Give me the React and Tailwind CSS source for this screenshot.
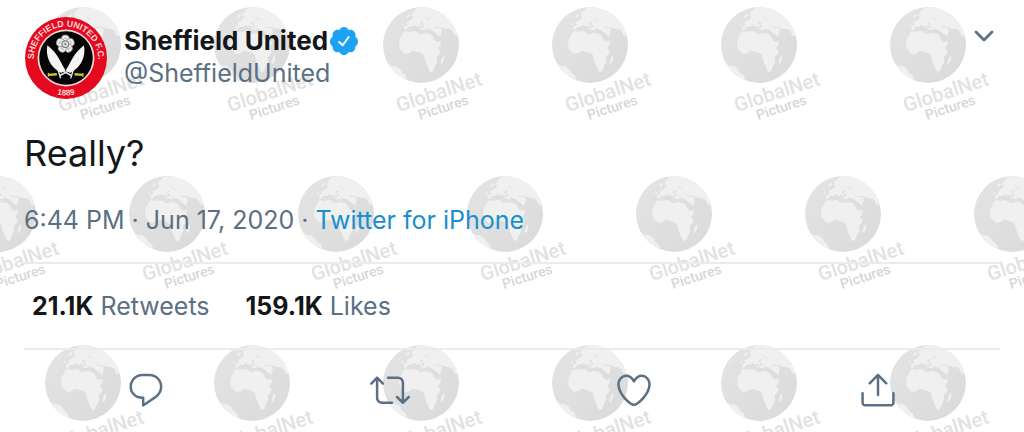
import { ChevronDown } from "lucide-react"

const actions = [
  {
    label: "Reply",
    paths: [
      "M14.046 2.242l-4.148-.01h-.002c-4.374 0-7.8 3.427-7.8 7.802 0 4.098 3.186 7.206 7.465 7.37v3.828c0 .108.044.286.12.403.142.225.384.347.632.347.138 0 .277-.038.402-.118.264-.168 6.473-4.14 8.088-5.506 1.902-1.61 3.04-3.97 3.043-6.312v-.017c-.006-4.367-3.43-7.787-7.8-7.788zm3.787 12.972c-1.134.96-4.862 3.405-6.772 4.643V16.67c0-.414-.335-.75-.75-.75h-.396c-3.66 0-6.318-2.476-6.318-5.886 0-3.534 2.768-6.302 6.3-6.302l4.147.01h.002c3.532 0 6.3 2.766 6.302 6.296-.003 1.91-.942 3.844-2.514 5.176z",
    ],
  },
  {
    label: "Retweet",
    paths: [
      "M23.77 15.67c-.292-.293-.767-.293-1.06 0l-2.22 2.22V7.65c0-2.068-1.683-3.75-3.75-3.75h-5.85c-.414 0-.75.336-.75.75s.336.75.75.75h5.85c1.24 0 2.25 1.01 2.25 2.25v10.24l-2.22-2.22c-.293-.293-.768-.293-1.06 0s-.294.768 0 1.06l3.5 3.5c.145.147.337.22.53.22s.383-.072.53-.22l3.5-3.5c.294-.292.294-.767 0-1.06zm-10.66 3.28H7.26c-1.24 0-2.25-1.01-2.25-2.25V6.46l2.22 2.22c.148.147.34.22.532.22s.384-.073.53-.22c.293-.293.293-.768 0-1.06l-3.5-3.5c-.293-.294-.768-.294-1.06 0l-3.5 3.5c-.294.292-.294.767 0 1.06s.767.293 1.06 0l2.22-2.22V16.7c0 2.068 1.683 3.75 3.75 3.75h5.85c.414 0 .75-.336.75-.75s-.337-.75-.75-.75z",
    ],
  },
  {
    label: "Like",
    paths: [
      "M12 21.638h-.014C9.403 21.59 1.95 14.856 1.95 8.478c0-3.064 2.525-5.754 5.403-5.754 2.29 0 3.83 1.58 4.646 2.73.814-1.148 2.354-2.73 4.645-2.73 2.88 0 5.404 2.69 5.404 5.755 0 6.376-7.454 13.11-10.037 13.157H12zM7.354 4.225c-2.08 0-3.903 1.988-3.903 4.255 0 5.74 7.034 11.596 8.55 11.658 1.518-.062 8.55-5.917 8.55-11.658 0-2.267-1.823-4.255-3.903-4.255-2.528 0-3.94 2.936-3.952 2.965-.23.562-1.156.562-1.387 0-.014-.03-1.425-2.965-3.954-2.965z",
    ],
  },
  {
    label: "Share",
    paths: [
      "M17.53 7.47l-5-5c-.293-.293-.768-.293-1.06 0l-5 5c-.294.293-.294.768 0 1.06s.767.294 1.06 0l3.72-3.72V15c0 .414.336.75.75.75s.75-.336.75-.75V4.81l3.72 3.72c.146.147.338.22.53.22s.384-.072.53-.22c.293-.293.293-.767 0-1.06z",
      "M19.708 21.944H4.292C3.028 21.944 2 20.916 2 19.652V14c0-.414.336-.75.75-.75s.75.336.75.75v5.652c0 .437.355.792.792.792h15.416c.437 0 .792-.355.792-.792V14c0-.414.336-.75.75-.75s.75.336.75.75v5.652c0 1.264-1.028 2.292-2.292 2.292z",
    ],
  },
]

const stats = [
  { value: "21.1K", label: "Retweets" },
  { value: "159.1K", label: "Likes" },
]

// Every second row is shifted by half a step
const marks = [0, 1, 2].flatMap((row) =>
  [0, 1, 2, 3, 4, 5, 6].map((col) => ({
    x: (row % 2 ? -2 : 83) + col * 169,
    y: 45 + row * 169,
  }))
)

const Watermark = () => (
  <svg className="absolute inset-0 h-full w-full" aria-hidden="true">
    <defs>
      <linearGradient id="sea" x1="0" y1="0" x2="1" y2="1">
        <stop offset="0" stopColor="#e4e4e4" />
        <stop offset="1" stopColor="#dadada" />
      </linearGradient>
      <clipPath id="globe-clip">
        <circle cx="152" cy="134" r="114" />
      </clipPath>
      <g id="mark">
        <g transform="scale(0.3333) translate(-152 -134)" clipPath="url(#globe-clip)">
          <circle cx="152" cy="134" r="115" fill="url(#sea)" />
          <g fill="#f0f0f0">
            <path d="M104 92L118 95L128 92L139 94L144 100L154 101L163 98L180 101L187 108L192 118L199 124L212 122L210 134L203 144L211 151L208 162L199 171L201 184L194 198L188 213L180 215L174 204L168 190L163 176L161 164L151 157L140 154L128 151L116 159L104 161L95 153L88 144L86 132L88 116L95 106L98 97Z" />
            <path d="M126 38L140 24L160 18L190 20L225 45L255 80L262 108L252 105L246 91L238 87L226 85L213 82L214 95L209 109L196 99L183 88L174 87L160 89L150 86L145 78L139 80L133 73L124 80L113 84L108 90L101 87L103 77L112 74L108 67L120 59L129 52L123 48Z" />
            <path d="M92 73L96 65L101 68L99 76ZM106 49L115 41L120 43L112 53Z" />
            <path d="M216 169L222 165L221 179L214 192L210 187Z" />
            <path d="M40 182L54 190L64 197L78 198L90 207L95 217L106 225L113 246L70 236Z" />
          </g>
          <g fill="none" stroke="#d9d9d9" strokeWidth="3" strokeLinecap="round">
            <path d="M109 89Q114 78 123 81L131 90M133 78L141 88M145 77Q152 86 161 77L151 69L158 65" />
            <path d="M168 82L177 93L204 111M164 52L176 59M192 80L213 82" strokeWidth="2" />
            <path d="M94 72L102 63M119 53L128 47" strokeWidth="2" />
          </g>
        </g>
        <g transform="rotate(-18)" fontFamily="Roboto, sans-serif" fontWeight="500">
          <text x="-42" y="57" fontSize="20" fill="#e2e2e2">GlobalNet</text>
          <text x="-24" y="71" fontSize="14" fill="#d6d6d6">Pictures</text>
        </g>
      </g>
    </defs>
    {marks.map((mark) => (
      <use key={`${mark.x}-${mark.y}`} href="#mark" x={mark.x} y={mark.y} />
    ))}
  </svg>
)

const Sword = () => (
  <>
    <path d="M67 84C61 116 74 148 108 166L121 158C108 142 101 110 67 84Z" fill="#f4f4f4" />
    <path d="M112 160L138 174" stroke="#e5e5e5" strokeWidth="5" />
    <path d="M143 159L136 182" stroke="#eee" strokeWidth="4" />
    <path d="M147 170L172 172" stroke="#d3c32c" strokeWidth="7" />
    <path d="M172 166V177" stroke="#d3c32c" strokeWidth="4" />
  </>
)

const Crest = () => (
  <svg viewBox="-2 -2 248 248" className="h-full w-full" role="img" aria-label="Sheffield United crest">
    <defs>
      <path id="ring-top" d="M28.1 139.5A95 95 0 1 1 215.4 141" />
      <path id="ring-bottom" d="M60 214A112 112 0 0 0 184 214" />
    </defs>
    <circle cx="122" cy="122" r="121" fill="#e5091f" />
    <circle cx="122" cy="122" r="84" fill="#efd9d9" />
    <circle cx="122" cy="122" r="79" fill="#050505" />
    <g fill="#fbdcdc" fontFamily="'Liberation Sans', sans-serif" fontWeight="700">
      <text fontSize="26">
        <textPath href="#ring-top" startOffset="50%" textAnchor="middle">SHEFFIELD UNITED F.C.</textPath>
      </text>
      <text fontSize="24" textAnchor="middle">
        <textPath href="#ring-bottom" startOffset="50%">1889</textPath>
      </text>
    </g>
    <g transform="translate(120 81)">
      {[0, 72, 144, 216, 288].map((angle) => (
        <g key={angle} transform={`rotate(${angle})`}>
          <circle cx="0" cy="-15" r="12" fill="#ededed" stroke="#888" strokeWidth="2" />
          <path d="M-5 -15Q0 -21 5 -15" fill="none" stroke="#999" strokeWidth="2" />
        </g>
      ))}
      <circle r="10" fill="#ddd" stroke="#777" strokeWidth="3" />
      <circle r="3" fill="#777" />
    </g>
    <g fill="none">
      <Sword />
      <g transform="translate(242 0) scale(-1 1)">
        <Sword />
      </g>
    </g>
  </svg>
)

const VerifiedBadge = () => (
  <svg viewBox="0 0 24 24" className="h-8 w-8 shrink-0" role="img" aria-label="Verified account">
    <path
      fill="#1da1f2"
      d="M22.5 12.5c0-1.58-.875-2.95-2.148-3.6.154-.435.238-.905.238-1.4 0-2.21-1.71-3.998-3.818-3.998-.47 0-.92.084-1.336.25C14.818 2.415 13.51 1.5 12 1.5s-2.816.917-3.437 2.25c-.415-.165-.866-.25-1.336-.25-2.11 0-3.818 1.79-3.818 4 0 .494.083.964.237 1.4-1.272.65-2.147 2.018-2.147 3.6 0 1.495.782 2.798 1.942 3.486-.02.17-.032.34-.032.514 0 2.21 1.708 4 3.818 4 .47 0 .92-.086 1.335-.25.62 1.334 1.926 2.25 3.437 2.25 1.512 0 2.818-.916 3.437-2.25.415.163.865.248 1.336.248 2.11 0 3.818-1.79 3.818-4 0-.174-.012-.344-.033-.513 1.158-.687 1.943-1.99 1.943-3.484z"
    />
    <path d="M8.4 12.7L11 15.2L15.5 9" fill="none" stroke="#fff" strokeWidth="1.5" strokeLinecap="round" strokeLinejoin="round" />
  </svg>
)

const App = () => {
  return (
    <main className="relative min-h-screen overflow-hidden bg-white font-['Inter',sans-serif] text-[#14171a]">
      <Watermark />
      <article className="relative px-6 pt-4">
        <header className="flex items-start">
          <a href="#profile" className="h-[84px] w-[84px] shrink-0">
            <Crest />
          </a>
          <div className="ml-4 min-w-0 flex-1 pt-2 text-[25px] leading-[33px]">
            <div className="flex items-center">
              <a href="#profile" className="text-[26px] font-bold">Sheffield United</a>
              <VerifiedBadge />
            </div>
            <p className="text-[#5b7083]">@SheffieldUnited</p>
          </div>
          <button type="button" aria-label="More options" className="mt-1 text-[#5b7083]">
            <ChevronDown className="h-8 w-8" strokeWidth={2} />
          </button>
        </header>

        <p className="mt-7 text-4xl leading-[50px]">Really?</p>

        <p className="mt-[22px] text-[25px] leading-10 text-[#5b7083]">
          6:44 PM · Jun 17, 2020 ·{" "}
          <a href="#source" className="text-[#1b8fce]">Twitter for iPhone</a>
        </p>

        <div className="mt-[22px] flex gap-9 border-y-2 border-[#ebebeb] px-2 py-[22px] text-[25px] leading-10">
          {stats.map((stat) => (
            <a key={stat.label} href="#stats" className="text-[#5b7083]">
              <span className="font-bold text-[#14171a]">{stat.value}</span> {stat.label}
            </a>
          ))}
        </div>

        <div className="flex pt-5">
          {actions.map((action) => (
            <div key={action.label} className="flex flex-1 justify-center">
              <button type="button" aria-label={action.label} className="text-[#5b7083]">
                <svg viewBox="0 0 24 24" className="h-10 w-10" fill="currentColor">
                  {action.paths.map((d) => (
                    <path key={d} d={d} />
                  ))}
                </svg>
              </button>
            </div>
          ))}
        </div>
      </article>
    </main>
  )
}

export default App
